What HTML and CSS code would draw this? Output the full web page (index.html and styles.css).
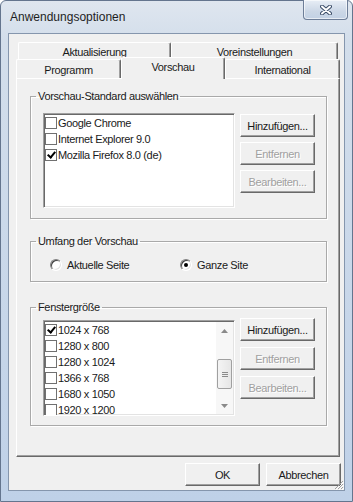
FILE: index.html
```html
<!DOCTYPE html>
<html lang="de">
<head>
    <meta charset="UTF-8">
    <title>Anwendungsoptionen</title>
    <link rel="stylesheet" href="styles.css">
</head>
<body>
    <div class="window">
        <div class="titlebar">
            <span class="title">Anwendungsoptionen</span>
            <div class="close">
                <svg width="12" height="10" viewBox="0 0 12 10">
                    <path d="M2 1.5 L10 8.5 M10 1.5 L2 8.5" stroke="#3b4d68" stroke-width="4" stroke-linecap="round"/>
                    <path d="M2 1.5 L10 8.5 M10 1.5 L2 8.5" stroke="#fff" stroke-width="2" stroke-linecap="round"/>
                </svg>
            </div>
        </div>

        <div class="client">
            <div class="tabs">
                <div class="tabrow back">
                    <div class="tab tab-akt">Aktualisierung</div>
                    <div class="tab tab-vor">Voreinstellungen</div>
                </div>
                <div class="tabrow front">
                    <div class="tab tab-prog">Programm</div>
                    <div class="tab tab-vsch active">Vorschau</div>
                    <div class="tab tab-intl">International</div>
                </div>

                <div class="panel">
                    <fieldset class="group group-std">
                        <legend>Vorschau-Standard auswählen</legend>
                        <div class="group-row">
                            <div class="listbox list-browser">
                                <div class="items">
                                    <div class="item"><span class="check"></span>Google Chrome</div>
                                    <div class="item"><span class="check"></span>Internet Explorer 9.0</div>
                                    <div class="item"><span class="check checked"></span>Mozilla Firefox 8.0 (de)</div>
                                </div>
                            </div>
                            <div class="buttons">
                                <button class="btn">Hinzufügen...</button>
                                <button class="btn" disabled>Entfernen</button>
                                <button class="btn" disabled>Bearbeiten...</button>
                            </div>
                        </div>
                    </fieldset>

                    <fieldset class="group group-scope">
                        <legend>Umfang der Vorschau</legend>
                        <div class="radios">
                            <label class="radio-label"><span class="radio"></span>Aktuelle Seite</label>
                            <label class="radio-label"><span class="radio selected"></span>Ganze Site</label>
                        </div>
                    </fieldset>

                    <fieldset class="group group-size">
                        <legend>Fenstergröße</legend>
                        <div class="group-row">
                            <div class="listbox list-size">
                                <div class="items">
                                    <div class="item"><span class="check checked"></span>1024 x 768</div>
                                    <div class="item"><span class="check"></span>1280 x 800</div>
                                    <div class="item"><span class="check"></span>1280 x 1024</div>
                                    <div class="item"><span class="check"></span>1366 x 768</div>
                                    <div class="item"><span class="check"></span>1680 x 1050</div>
                                    <div class="item"><span class="check"></span>1920 x 1200</div>
                                </div>
                                <div class="scrollbar">
                                    <div class="arrow">
                                        <svg width="7" height="4" viewBox="0 0 7 4"><path d="M0 4 L3.5 0 L7 4 Z" fill="#8a8a8a"/></svg>
                                    </div>
                                    <div class="track">
                                        <div class="thumb"><span></span><span></span><span></span></div>
                                    </div>
                                    <div class="arrow">
                                        <svg width="7" height="4" viewBox="0 0 7 4"><path d="M0 0 L3.5 4 L7 0 Z" fill="#8a8a8a"/></svg>
                                    </div>
                                </div>
                            </div>
                            <div class="buttons">
                                <button class="btn">Hinzufügen...</button>
                                <button class="btn" disabled>Entfernen</button>
                                <button class="btn" disabled>Bearbeiten...</button>
                            </div>
                        </div>
                    </fieldset>
                </div>
            </div>

            <div class="footer">
                <button class="btn">OK</button>
                <button class="btn">Abbrechen</button>
            </div>

            <svg class="gripper" width="10" height="10" viewBox="0 0 10 10">
                <path d="M9 1 L1 9 M9 4 L4 9 M9 7 L7 9" stroke="#a0a0a0" stroke-width="1"/>
                <path d="M10 2 L2 10 M10 5 L5 10 M10 8 L8 10" stroke="#fff" stroke-width="1"/>
            </svg>
        </div>
    </div>
</body>
</html>
```

FILE: styles.css
```css
* {
    box-sizing: border-box;
}

body {
    margin: 0;
    background: #fff;
    font-family: "Liberation Sans", Arial, sans-serif;
    font-size: 11px;
    letter-spacing: -0.35px;
    color: #1a1a1a;
}

.window {
    width: 353px;
    height: 502px;
    padding: 0 7px 10px 7px;
    display: flex;
    flex-direction: column;
    background: linear-gradient(180deg, #dfe6ef 0, #d3deeb 40px, #bfd1e8 100%);
    border: 1px solid #64758e;
    border-radius: 6px 6px 0 0;
}

.titlebar {
    height: 32px;
    display: flex;
    justify-content: space-between;
    align-items: flex-start;
}

.title {
    font-size: 12px;
    letter-spacing: 0;
    margin: 9px 0 0 2px;
    color: #1e1e1e;
}

.close {
    width: 45px;
    height: 20px;
    margin-top: -1px;
    margin-right: -3px;
    display: flex;
    align-items: center;
    justify-content: center;
    border: 1px solid #6d7e98;
    border-top: none;
    border-radius: 0 0 4px 4px;
    background: linear-gradient(180deg, #e8eef6, #cbd7e6 60%, #c2d1e4);
    box-shadow: inset 0 0 0 1px rgba(255, 255, 255, 0.6);
}

.client {
    flex: 1;
    position: relative;
    display: flex;
    flex-direction: column;
    background: #f0f0f0;
    border: 1px solid #8596ad;
    padding: 8px 4px 0 7px;
}

.tabs {
    width: 324px;
}

.tabrow {
    display: flex;
}

.tabrow.back {
    height: 17px;
    margin: 0 2px;
}

.tabrow.front {
    height: 19px;
}

.tab {
    display: flex;
    align-items: center;
    justify-content: center;
    background: #f0f0f0;
    border-top: 1px solid #fff;
    border-left: 1px solid #fff;
    border-right: 1px solid #696969;
    border-radius: 2px 2px 0 0;
    box-shadow: inset -1px 0 #a0a0a0;
    padding-top: 2px;
}

.tab-akt { width: 153px; }
.tab-vor { width: 167px; }
.tab-prog { width: 105px; }
.tab-vsch { width: 104px; }
.tab-intl { width: 115px; }

.tab.active {
    position: relative;
    z-index: 1;
    height: 22px;
    margin-top: -2px;
    margin-bottom: -1px;
    padding-top: 0;
    padding-bottom: 3px;
}

.panel {
    height: 379px;
    border-top: 1px solid #fff;
    border-left: 1px solid #fff;
    border-right: 1px solid #696969;
    border-bottom: 1px solid #696969;
    box-shadow: inset -1px -1px #a0a0a0;
    padding: 10px 0 0 13px;
}

.group {
    width: 297px;
    margin: 0;
    padding: 10px 11px 10px 12px;
    border: 1px solid #a9a9a9;
    box-shadow: inset 1px 1px #fff, 1px 1px #fff;
}

.group legend {
    margin-left: -7px;
    padding: 0 2px;
    line-height: 14px;
}

.group-scope {
    margin-top: 15px;
    padding-top: 10px;
    padding-bottom: 9px;
}

.group-size {
    margin-top: 18px;
    padding-top: 6px;
    padding-bottom: 9px;
}

.group-row {
    display: flex;
    gap: 5px;
    align-items: flex-start;
}

.listbox {
    width: 192px;
    display: flex;
    background: #fff;
    border: 1px solid;
    border-color: #a0a0a0 #fff #fff #a0a0a0;
    box-shadow: inset 1px 1px #696969, inset -1px -1px #e3e3e3;
    padding: 1px;
    overflow: hidden;
}

.list-browser {
    height: 95px;
}

.list-size {
    height: 96px;
}

.items {
    flex: 1;
}

.item {
    height: 16px;
    display: flex;
    align-items: center;
    white-space: nowrap;
}

.check {
    width: 12px;
    height: 12px;
    margin: 0 1px 0 0;
    border: 1px solid #707070;
    background: #fff;
    position: relative;
}

.check.checked::after {
    content: "";
    position: absolute;
    left: 3px;
    top: 0;
    width: 3px;
    height: 6px;
    border: solid #000;
    border-width: 0 2px 2px 0;
    transform: rotate(40deg);
}

.buttons {
    display: flex;
    flex-direction: column;
    gap: 5px;
    margin-top: 1px;
}

.group-size .buttons {
    margin-top: -2px;
    gap: 6px;
}

.btn {
    width: 75px;
    height: 23px;
    padding: 0;
    font-family: inherit;
    font-size: 11px;
    letter-spacing: -0.35px;
    color: #1a1a1a;
    background: #f0f0f0;
    border: 1px solid;
    border-color: #fff #696969 #696969 #fff;
    box-shadow: inset -1px -1px #a0a0a0;
}

.btn:disabled {
    color: #a0a0a0;
    text-shadow: 1px 1px #fff;
}

.radios {
    display: flex;
    align-items: center;
    padding-left: 7px;
}

.radio-label {
    display: flex;
    align-items: center;
    height: 14px;
}

.radio-label:first-child {
    width: 130px;
}

.radio {
    width: 12px;
    height: 12px;
    margin-right: 5px;
    border-radius: 50%;
    background: #fff;
    border: 1px solid;
    border-color: #808080 #fff #fff #808080;
    box-shadow: inset 1px 1px #404040, inset -1px -1px #e3e3e3;
    position: relative;
}

.radio.selected::after {
    content: "";
    position: absolute;
    left: 3px;
    top: 3px;
    width: 4px;
    height: 4px;
    border-radius: 50%;
    background: #000;
}

.scrollbar {
    width: 17px;
    display: flex;
    flex-direction: column;
    background: #f7f7f7;
}

.arrow {
    height: 17px;
    display: flex;
    align-items: center;
    justify-content: center;
}

.track {
    flex: 1;
    padding: 20px 1px 0 1px;
}

.thumb {
    height: 30px;
    display: flex;
    flex-direction: column;
    align-items: center;
    justify-content: center;
    gap: 1px;
    border: 1px solid #a0a0a0;
    border-radius: 2px;
    background: linear-gradient(90deg, #f4f4f4, #e6e6e6);
}

.thumb span {
    width: 6px;
    height: 1px;
    background: #8a8a8a;
}

.footer {
    display: flex;
    justify-content: flex-end;
    gap: 6px;
    margin: 6px -1px 0 0;
}

.gripper {
    position: absolute;
    right: 0;
    bottom: 0;
}
```
